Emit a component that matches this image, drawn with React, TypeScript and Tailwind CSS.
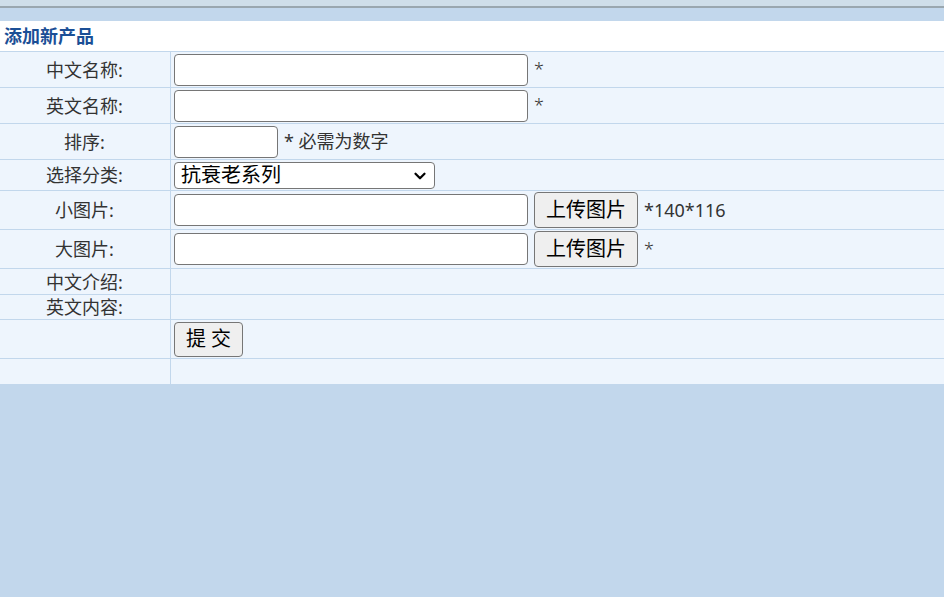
import { ChevronDown } from 'lucide-react';

const font = { fontFamily: '"Noto Sans", "Noto Sans CJK SC", sans-serif' };

function Label({ children }: { children?: React.ReactNode }) {
  return (
    <div className="w-[171px] shrink-0 border-r border-[#c2d7ec] flex items-center justify-center pr-px text-[18px] leading-none text-[#333]">
      {children}
    </div>
  );
}

function TextInput({ width }: { width: string }) {
  return (
    <input
      type="text"
      className={`${width} h-[32px] rounded-[4px] border border-[#767676] bg-white`}
    />
  );
}

function UploadButton() {
  return (
    <button className="ml-[6px] h-[36px] w-[104px] rounded-[4px] border border-[#767676] bg-[#efefef] text-[20px] leading-none text-black">
      上传图片
    </button>
  );
}

export default function App() {
  return (
    <div className="min-h-screen w-[944px] bg-[#c2d7ec]" style={font}>
      <div className="h-[6px] bg-[#cfdee9]" />
      <div className="h-[2px] bg-[#9aa7af]" />
      <div className="h-[13px] bg-[#c2d7ec]" />
      <div className="h-[31px] bg-white border-b border-[#c2d7ec] flex items-center pl-[4px]">
        <span className="text-[18px] font-bold text-[#1b4f96] leading-none">添加新产品</span>
      </div>

      <div className="bg-[#eef5fd] text-[#333]">
        <div className="flex h-[36px] border-b border-[#c2d7ec]">
          <Label>中文名称:</Label>
          <div className="flex items-center pl-[3px]">
            <TextInput width="w-[354px]" />
            <span className="ml-[6px] text-[18px] font-light">*</span>
          </div>
        </div>

        <div className="flex h-[36px] border-b border-[#c2d7ec]">
          <Label>英文名称:</Label>
          <div className="flex items-center pl-[3px]">
            <TextInput width="w-[354px]" />
            <span className="ml-[6px] text-[18px] font-light">*</span>
          </div>
        </div>

        <div className="flex h-[36px] border-b border-[#c2d7ec]">
          <Label>排序:</Label>
          <div className="flex items-center pl-[3px]">
            <TextInput width="w-[104px]" />
            <span className="ml-[6px] text-[18px]">* 必需为数字</span>
          </div>
        </div>

        <div className="flex h-[31px] border-b border-[#c2d7ec]">
          <Label>选择分类:</Label>
          <div className="flex items-center pl-[3px]">
            <div className="relative">
              <select className="h-[27px] w-[261px] appearance-none rounded-[4px] border border-[#767676] bg-white pl-[6px] text-[20px] leading-none text-black">
                <option>抗衰老系列</option>
              </select>
              <ChevronDown
                className="pointer-events-none absolute right-[6px] top-[5px] h-[18px] w-[18px] text-black"
                strokeWidth={3}
              />
            </div>
          </div>
        </div>

        <div className="flex h-[39px] border-b border-[#c2d7ec]">
          <Label>小图片:</Label>
          <div className="flex items-center pl-[3px]">
            <TextInput width="w-[354px]" />
            <UploadButton />
            <span className="ml-[6px] text-[18px]">*140*116</span>
          </div>
        </div>

        <div className="flex h-[39px] border-b border-[#c2d7ec]">
          <Label>大图片:</Label>
          <div className="flex items-center pl-[3px]">
            <TextInput width="w-[354px]" />
            <UploadButton />
            <span className="ml-[6px] text-[18px] font-light">*</span>
          </div>
        </div>

        <div className="flex h-[26px] border-b border-[#c2d7ec]">
          <Label>中文介绍:</Label>
          <div />
        </div>

        <div className="flex h-[25px] border-b border-[#c2d7ec]">
          <Label>英文内容:</Label>
          <div />
        </div>

        <div className="flex h-[39px] border-b border-[#c2d7ec]">
          <Label />
          <div className="flex items-center pl-[3px]">
            <button className="h-[35px] w-[69px] rounded-[4px] border border-[#767676] bg-[#efefef] text-[20px] leading-none text-black">
              提 交
            </button>
          </div>
        </div>

        <div className="flex h-[25px]">
          <Label />
          <div />
        </div>
      </div>
    </div>
  );
}
